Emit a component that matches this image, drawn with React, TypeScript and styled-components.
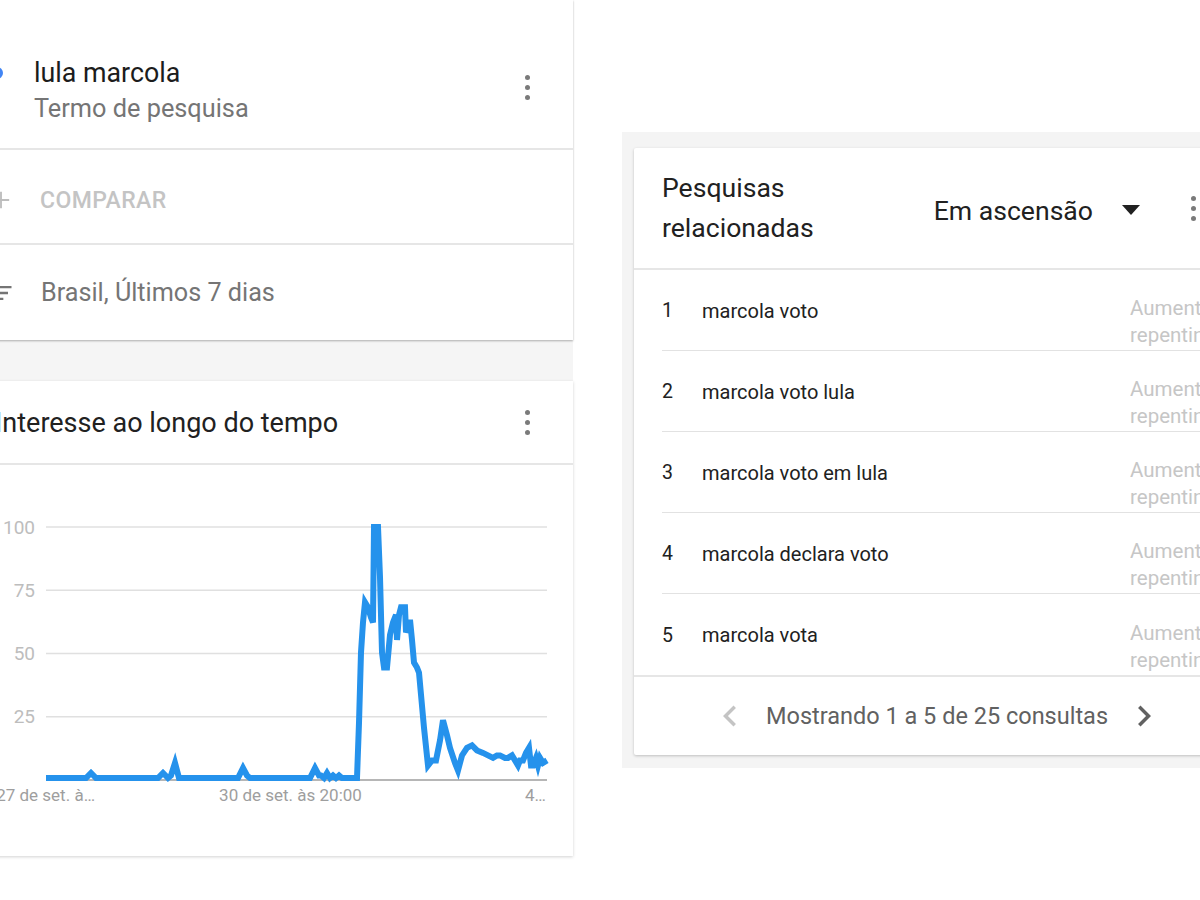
import React from "react";
import styled, { createGlobalStyle } from "styled-components";

const GlobalStyle = createGlobalStyle`
  html, body { margin: 0; padding: 0; background: #ffffff; overflow: hidden; }
  body { font-family: Roboto, "Liberation Sans", Arial, sans-serif; -webkit-font-smoothing: antialiased; }
`;

const Page = styled.div`
  display: flex;
  align-items: flex-start;
  width: 1200px;
  height: 900px;
  overflow: hidden;
  background: #ffffff;
`;

/* ---------- left column ---------- */
const LeftPanel = styled.div`
  flex-shrink: 0;
  width: 597px;
  margin-left: -24px;
  display: flex;
  flex-direction: column;
`;

const TopCard = styled.section`
  background: #ffffff;
  box-shadow: 0 1px 2px rgba(0, 0, 0, 0.3);
  position: relative;
  z-index: 1;
`;

const TermRow = styled.div`
  height: 150px;
  box-sizing: border-box;
  padding-top: 55px;
  display: flex;
  align-items: flex-start;
  border-bottom: 2px solid #e6e6e6;
`;

const Dot = styled.span`
  flex-shrink: 0;
  width: 12px;
  height: 12px;
  border-radius: 50%;
  background: #4285f4;
  margin: 12px 0 0 15px;
`;

const TermText = styled.div`
  margin-left: 31px;
  display: flex;
  flex-direction: column;
`;

const TermTitle = styled.div`
  font-size: 26.8px;
  line-height: 36px;
  color: #1c1c1c;
`;

const TermSub = styled.div`
  font-size: 25.3px;
  line-height: 36px;
  color: #757575;
`;

const KebabWrap = styled.span<{ $top?: number; $right?: number; $left?: number }>`
  margin-left: ${(p) => (p.$left !== undefined ? `${p.$left}px` : "auto")};
  margin-top: ${(p) => p.$top ?? 0}px;
  margin-right: ${(p) => p.$right ?? 34}px;
  width: 24px;
  display: flex;
  flex-direction: column;
  align-items: center;
  gap: 5px;
  flex-shrink: 0;
`;

const KebabDot = styled.span`
  width: 5px;
  height: 5px;
  border-radius: 50%;
  background: #7a7a7a;
`;

const Kebab = ({ top, right, left }: { top?: number; right?: number; left?: number }) => (
  <KebabWrap $top={top} $right={right} $left={left}>
    <KebabDot />
    <KebabDot />
    <KebabDot />
  </KebabWrap>
);

const ActionRow = styled.div<{ $h: number; $pt: number; $border?: boolean }>`
  height: ${(p) => p.$h}px;
  box-sizing: border-box;
  padding-top: ${(p) => p.$pt}px;
  display: flex;
  align-items: center;
  border-bottom: ${(p) => (p.$border ? "2px solid #e6e6e6" : "none")};
`;

const IconBox = styled.span`
  flex-shrink: 0;
  width: 28px;
  height: 28px;
  margin-left: 11px;
  display: flex;
`;

const CompareText = styled.span`
  margin-left: 25px;
  font-size: 23px;
  font-weight: 500;
  letter-spacing: 0.4px;
  color: #c4c4c4;
`;

const FilterText = styled.span`
  margin-left: 26px;
  font-size: 25.2px;
  color: #757575;
`;

const GrayBand = styled.div`
  height: 41px;
  background: #f5f5f5;
`;

const ChartCard = styled.section`
  height: 475px;
  background: #ffffff;
  box-shadow: 0 1px 3px rgba(0, 0, 0, 0.18);
  display: flex;
  flex-direction: column;
`;

const ChartHeader = styled.div`
  height: 84px;
  flex-shrink: 0;
  box-sizing: border-box;
  display: flex;
  align-items: center;
  border-bottom: 2px solid #e6e6e6;
  padding-top: 1px;
`;

const ChartTitle = styled.span`
  margin-left: 19px;
  font-size: 27px;
  color: #212121;
`;

const ChartSvg = styled.svg`
  display: block;
  flex-shrink: 0;
`;

/* ---------- right column ---------- */
const RightPanel = styled.div`
  flex-shrink: 0;
  margin-left: 49px;
  margin-top: 132px;
  width: 634px;
  height: 636px;
  box-sizing: border-box;
  padding: 16px 0 0 12px;
  background: #f4f4f4;
`;

const RelCard = styled.section`
  width: 606px;
  height: 607px;
  background: #ffffff;
  border-radius: 2px;
  box-shadow: 0 1px 3px rgba(0, 0, 0, 0.22);
  display: flex;
  flex-direction: column;
`;

const RelHeader = styled.div`
  height: 122px;
  flex-shrink: 0;
  box-sizing: border-box;
  display: flex;
  align-items: center;
  padding: 0 35px 0 28px;
  border-bottom: 2px solid #e6e6e6;
`;

const RelTitle = styled.div`
  font-size: 26.6px;
  line-height: 40px;
  color: #212121;
`;

const SortLabel = styled.span`
  margin-left: auto;
  font-size: 26.6px;
  color: #212121;
  padding-top: 4px;
`;

const Caret = styled.span`
  margin-left: 29px;
  margin-top: 3px;
  width: 0;
  height: 0;
  border-left: 9px solid transparent;
  border-right: 9px solid transparent;
  border-top: 10px solid #212121;
`;

const Rows = styled.div`
  padding-left: 28px;
  display: flex;
  flex-direction: column;
`;

const Row = styled.div<{ $last?: boolean }>`
  height: 81px;
  box-sizing: border-box;
  display: grid;
  grid-template-columns: 40px 1fr 110px;
  border-bottom: ${(p) => (p.$last ? "none" : "1.5px solid #e2e2e2")};
`;

const RowNum = styled.span`
  align-self: center;
  font-size: 19.5px;
  color: #212121;
  padding-top: 1px;
`;

const RowTerm = styled.span`
  align-self: center;
  font-size: 20px;
  color: #212121;
  padding-top: 1px;
`;

const RowChange = styled.span`
  align-self: end;
  font-size: 20.5px;
  line-height: 27px;
  color: #c6c6c6;
  padding: 0 16px 1px 0;
  overflow: hidden;
`;

const Footer = styled.div`
  height: 80px;
  flex-shrink: 0;
  box-sizing: border-box;
  border-top: 2px solid #e6e6e6;
  display: flex;
  align-items: center;
  justify-content: center;
`;

const FooterText = styled.span`
  font-size: 23.5px;
  color: #616161;
  margin: 0 15px;
`;

const Chevron = ({ dir, color }: { dir: "left" | "right"; color: string }) => (
  <svg width="42" height="42" viewBox="0 0 24 24">
    <path
      fill={color}
      d={
        dir === "left"
          ? "M15.41 7.41L14 6l-6 6 6 6 1.41-1.41L10.83 12z"
          : "M10 6L8.59 7.41 13.17 12l-4.58 4.59L10 18l6-6z"
      }
    />
  </svg>
);

/* ---------- chart data ---------- */
const data: [number, number][] = [
  [46, 0], [86, 0], [91, 2], [96, 0], [158, 0], [163, 2], [168, 0], [171, 1], [175, 6], [179, 0],
  [238, 0], [243, 4], [247, 1], [250, 0], [310, 0], [315, 4], [319, 1], [321, 1], [324, 0],
  [327, 2], [330, 0], [333, 1], [336, 0], [339, 1], [342, 0], [357, 0], [359, 22], [361, 50],
  [363, 62], [365, 70], [368, 68], [371, 64], [373, 62], [374, 100], [378, 100], [380, 80],
  [382, 50], [384, 44], [387, 44], [390, 57], [393, 62], [396, 65], [397, 55], [399, 65],
  [401, 68], [405, 68], [406, 58], [408, 60], [410, 63], [412, 55], [414, 46], [417, 44],
  [419, 42], [424, 20], [428, 5], [432, 7], [436, 7], [440, 15], [443, 23], [447, 17],
  [450, 12], [455, 6], [458, 3], [462, 9], [467, 12], [472, 13], [477, 11], [483, 10],
  [488, 9], [493, 8], [497, 9], [500, 9], [505, 8], [508, 8], [512, 9], [515, 7], [518, 5],
  [520, 7], [523, 7], [526, 10], [529, 12], [531, 5], [533, 5], [536, 8], [538, 5], [540, 8],
  [543, 6], [547, 7],
];

const yOf = (v: number) => 779 - 2.51 * v;
const linePath = data
  .map(([x, v], i) => `${i ? "L" : "M"}${x} ${yOf(v).toFixed(1)}`)
  .join(" ");

const grid = [
  { y: 528, label: "100" },
  { y: 591.3, label: "75" },
  { y: 654.5, label: "50" },
  { y: 717.8, label: "25" },
];

const Chart = () => (
  <ChartSvg width="597" height="391" viewBox="-24 466 597 391">
    {grid.map((g) => (
      <g key={g.label}>
        <line x1="46" x2="547" y1={g.y} y2={g.y} stroke="#e0e0e0" strokeWidth="1.5" />
        <text
          x="35"
          y={g.y}
          textAnchor="end"
          dominantBaseline="central"
          fontFamily="Roboto, sans-serif"
          fontSize="19"
          fill="#bdbdbd"
        >
          {g.label}
        </text>
      </g>
    ))}
    <line x1="46" x2="547" y1="781" y2="781" stroke="#9e9e9e" strokeWidth="1.5" />
    <path d={linePath} fill="none" stroke="#2592ec" strokeWidth="6" strokeLinejoin="miter" />
    <g fontFamily="Roboto, sans-serif" fontSize="17" fill="#9e9e9e">
      <text x="95" y="796" textAnchor="end" dominantBaseline="central">27 de set. à…</text>
      <text x="290.5" y="796" textAnchor="middle" dominantBaseline="central">30 de set. às 20:00</text>
      <text x="546" y="796" textAnchor="end" dominantBaseline="central">4…</text>
    </g>
  </ChartSvg>
);

const related = [
  "marcola voto",
  "marcola voto lula",
  "marcola voto em lula",
  "marcola declara voto",
  "marcola vota",
];

export default function App() {
  return (
    <>
      <GlobalStyle />
      <Page>
        <LeftPanel>
          <TopCard>
            <TermRow>
              <Dot />
              <TermText>
                <TermTitle>lula marcola</TermTitle>
                <TermSub>Termo de pesquisa</TermSub>
              </TermText>
              <Kebab top={20} />
            </TermRow>
            <ActionRow $h={95} $pt={7} $border>
              <IconBox>
                <svg width="28" height="28" viewBox="0 0 24 24">
                  <path fill="#bdbdbd" d="M19 12.8h-6.2V19h-1.6v-6.2H5v-1.6h6.2V5h1.6v6.2H19v1.6z" />
                </svg>
              </IconBox>
              <CompareText>COMPARAR</CompareText>
            </ActionRow>
            <ActionRow $h={95} $pt={0}>
              <IconBox>
                <svg width="28" height="28" viewBox="0 0 24 24">
                  <path fill="#757575" d="M10 18h4v-2h-4v2zM3 6v2h18V6H3zm3 7h12v-2H6v2z" />
                </svg>
              </IconBox>
              <FilterText>Brasil, Últimos 7 dias</FilterText>
            </ActionRow>
          </TopCard>
          <GrayBand />
          <ChartCard>
            <ChartHeader>
              <ChartTitle>Interesse ao longo do tempo</ChartTitle>
              <Kebab />
            </ChartHeader>
            <Chart />
          </ChartCard>
        </LeftPanel>

        <RightPanel>
          <RelCard>
            <RelHeader>
              <RelTitle>
                Pesquisas
                <br />
                relacionadas
              </RelTitle>
              <SortLabel>Em ascensão</SortLabel>
              <Caret />
              <Kebab left={41} right={0} />
            </RelHeader>
            <Rows>
              {related.map((t, i) => (
                <Row key={t} $last={i === related.length - 1}>
                  <RowNum>{i + 1}</RowNum>
                  <RowTerm>{t}</RowTerm>
                  <RowChange>Aumento repentino</RowChange>
                </Row>
              ))}
            </Rows>
            <Footer>
              <Chevron dir="left" color="#c4c4c4" />
              <FooterText>Mostrando 1 a 5 de 25 consultas</FooterText>
              <Chevron dir="right" color="#616161" />
            </Footer>
          </RelCard>
        </RightPanel>
      </Page>
    </>
  );
}
